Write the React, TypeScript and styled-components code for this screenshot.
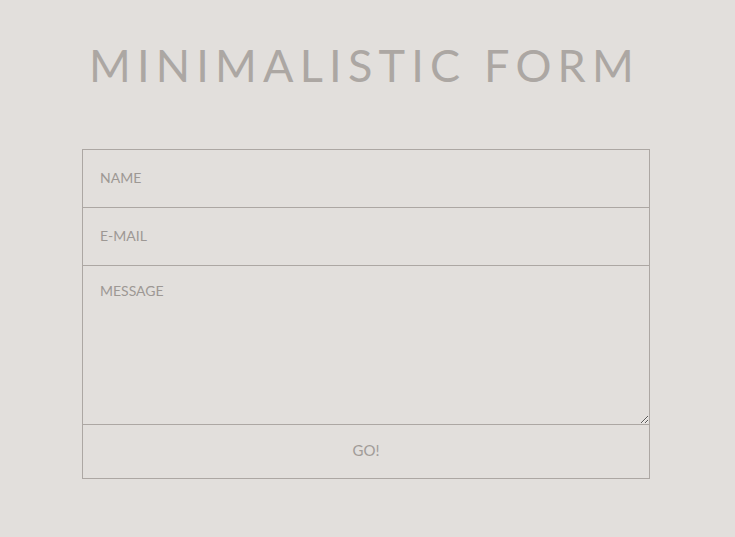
import styled, { createGlobalStyle } from 'styled-components'

const GlobalStyle = createGlobalStyle`
	html, body {
		margin: 0;
		padding: 0;
		background: #e2dfdc;
	}
	body {
		font-family: Lato, 'Open Sans', sans-serif;
	}
`

const Page = styled.main`
	min-height: 537px;
	padding: 43px 3px 0 0;
	box-sizing: border-box;
	display: flex;
	flex-direction: column;
	align-items: center;
`

const Title = styled.h1`
	margin: 0 0 61px 0;
	padding-right: 3px;
	font-size: 45px;
	line-height: 45px;
	font-weight: 400;
	letter-spacing: 6.2px;
	color: #aca7a3;
	text-transform: uppercase;
`

const Form = styled.form`
	width: 568px;
	box-sizing: border-box;
	border: 1px solid #aca7a3;
	display: flex;
	flex-direction: column;
`

const Field = styled.input`
	height: 58px;
	box-sizing: border-box;
	border: none;
	border-bottom: 1px solid #aca7a3;
	background: transparent;
	padding: 0 17px 2px;
	font-family: Lato, sans-serif;
	font-size: 14px;
	color: #8f8a86;
	outline: none;

	&::placeholder {
		color: #9d9894;
		text-transform: uppercase;
	}
`

const Message = styled.textarea`
	height: 159px;
	box-sizing: border-box;
	border: none;
	border-bottom: 1px solid #aca7a3;
	background: transparent;
	padding: 16px 17px;
	font-family: Lato, sans-serif;
	font-size: 14px;
	color: #8f8a86;
	outline: none;
	resize: vertical;

	&::placeholder {
		color: #9d9894;
		text-transform: uppercase;
	}
`

const Submit = styled.button`
	height: 53px;
	padding: 0 0 3px 0;
	border: none;
	background: transparent;
	font-family: Lato, sans-serif;
	font-size: 15px;
	color: #a19c98;
	text-transform: uppercase;
	cursor: pointer;
`

const App = () => {
	return (
		<>
			<GlobalStyle />
			<Page>
				<Title>Minimalistic Form</Title>
				<Form onSubmit={e => e.preventDefault()}>
					<Field type="text" placeholder="Name" />
					<Field type="email" placeholder="E-mail" />
					<Message placeholder="Message" />
					<Submit type="submit">Go!</Submit>
				</Form>
			</Page>
		</>
	)
}

export default App
